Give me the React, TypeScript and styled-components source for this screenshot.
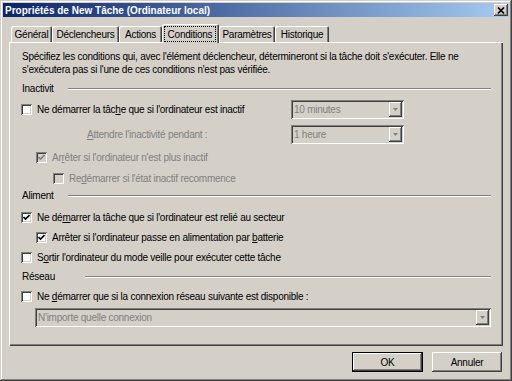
import React from "react";
import styled, { createGlobalStyle, css } from "styled-components";

const face = "#d4d0c8";
const shade = "#808080";
const dark = "#404040";
const light = "#ffffff";

const GlobalStyle = createGlobalStyle`
  html, body {
    margin: 0;
    padding: 0;
    background: ${face};
  }
  body {
    font-family: "Liberation Sans", Arial, sans-serif;
    font-size: 10px;
    letter-spacing: -0.25px;
    color: #000;
  }
  * {
    box-sizing: border-box;
  }
`;

const raised = css`
  box-shadow: inset -1px -1px ${dark}, inset 1px 1px ${light},
    inset -2px -2px ${shade}, inset 2px 2px ${face};
`;

const sunken = css`
  box-shadow: inset 1px 1px ${shade}, inset -1px -1px ${light},
    inset 2px 2px ${dark}, inset -2px -2px ${face};
`;

const Window = styled.div`
  width: 512px;
  height: 381px;
  padding: 3px;
  display: flex;
  flex-direction: column;
  background: ${face};
  box-shadow: inset -1px -1px ${dark}, inset 1px 1px ${face},
    inset -2px -2px ${shade}, inset 2px 2px ${light};
  overflow: hidden;
`;

const TitleBar = styled.div`
  height: 14px;
  display: flex;
  align-items: center;
  justify-content: space-between;
  padding: 0 1px 0 2px;
  background: linear-gradient(to right, #0a246a, #a6caf0);
  color: #fff;
  font-weight: bold;
  font-size: 10px;
  letter-spacing: 0;
  white-space: nowrap;
`;

const CloseButton = styled.div`
  width: 14px;
  height: 12px;
  display: flex;
  align-items: center;
  justify-content: center;
  background: ${face};
  ${raised};
`;

const Body = styled.div`
  flex: 1;
  display: flex;
  flex-direction: column;
  padding: 7px 6px 0 6px;
`;

const TabStrip = styled.div`
  height: 18px;
  display: flex;
  align-items: flex-end;
  padding-left: 2px;
  position: relative;
  z-index: 1;
`;

const Tab = styled.div<{ $active?: boolean; $w: number }>`
  width: ${p => p.$w}px;
  height: ${p => (p.$active ? 19 : 16)}px;
  margin-bottom: ${p => (p.$active ? -1 : 0)}px;
  display: flex;
  align-items: center;
  justify-content: center;
  padding: ${p => (p.$active ? "2px 3px 1px 2px" : "1px 0 0 0")};
  background: ${face};
  border-radius: 2px 2px 0 0;
  box-shadow: inset 1px 1px ${light}, inset -1px 0 ${dark}, inset -2px 0 ${shade};
  position: relative;
  z-index: ${p => (p.$active ? 2 : 1)};
  white-space: nowrap;
`;

const FocusRing = styled.span`
  flex: 1;
  align-self: stretch;
  display: flex;
  align-items: center;
  justify-content: center;
  border: 1px dotted #000;
`;

const Panel = styled.div`
  height: 304px;
  display: flex;
  flex-direction: column;
  padding: 8px 12px 0 12px;
  background: ${face};
  box-shadow: inset 1px 1px ${light}, inset -1px -1px ${dark}, inset -2px -2px ${shade};
`;

const Intro = styled.p`
  margin: 0 0 0 1px;
  line-height: 13px;
`;

const Header = styled.div<{ $mt: number }>`
  height: 13px;
  margin-top: ${p => p.$mt}px;
  margin-left: 1px;
  display: flex;
  align-items: center;
`;

const HeaderLabel = styled.span<{ $w: number }>`
  flex: 0 0 ${p => p.$w}px;
`;

const Rule = styled.div`
  flex: 1;
  height: 2px;
  border-top: 1px solid ${shade};
  border-bottom: 1px solid ${light};
`;

const Row = styled.div<{ $mt: number; $indent?: number; $h?: number }>`
  height: ${p => p.$h ?? 13}px;
  margin-top: ${p => p.$mt}px;
  padding-left: ${p => p.$indent ?? 0}px;
  display: flex;
  align-items: center;
  white-space: nowrap;
`;

const Label = styled.span<{ $disabled?: boolean; $w?: number }>`
  color: ${p => (p.$disabled ? shade : "#000")};
  ${p => p.$w !== undefined && `flex: 0 0 ${p.$w}px;`}
`;

const Box = styled.span<{ $disabled?: boolean }>`
  flex: 0 0 11px;
  width: 11px;
  height: 11px;
  margin-right: 5px;
  display: flex;
  align-items: center;
  justify-content: center;
  background: ${p => (p.$disabled ? face : light)};
  box-shadow: inset 1px 1px ${shade}, inset -1px -1px ${light},
    inset 2px 2px ${dark}, inset -2px -2px ${face};
`;

const Combo = styled.div<{ $w?: number; $ml?: number }>`
  ${p => (p.$w ? `width: ${p.$w}px;` : "flex: 1;")}
  margin-left: ${p => p.$ml ?? 0}px;
  height: 19px;
  display: flex;
  align-items: center;
  padding: 2px;
  background: ${face};
  ${sunken};
`;

const ComboText = styled.span`
  flex: 1;
  padding-left: 1px;
  color: ${shade};
  white-space: nowrap;
  overflow: hidden;
`;

const ComboButton = styled.span`
  width: 13px;
  height: 15px;
  display: flex;
  align-items: center;
  justify-content: center;
  background: ${face};
  ${raised};
`;

const Footer = styled.div`
  display: flex;
  justify-content: flex-end;
  gap: 9px;
  margin-top: 6px;
  padding-right: 1px;
`;

const Button = styled.div<{ $default?: boolean; $w: number }>`
  width: ${p => p.$w}px;
  height: 20px;
  display: flex;
  align-items: center;
  justify-content: center;
  background: ${face};
  ${p =>
    p.$default
      ? css`
          box-shadow: inset 0 0 0 1px #000, inset -2px -2px ${dark}, inset 2px 2px ${light},
            inset -3px -3px ${shade};
        `
      : raised};
`;

function Check({ checked, disabled }: { checked?: boolean; disabled?: boolean }) {
  return (
    <Box $disabled={disabled}>
      {checked && (
        <svg width="7" height="7" viewBox="0 0 7 7">
          <polyline
            points="0.5,3 2.5,5 6.5,1"
            fill="none"
            stroke={disabled ? shade : "#000"}
            strokeWidth="1.6"
          />
        </svg>
      )}
    </Box>
  );
}

function Select({ value, w, ml }: { value: string; w?: number; ml?: number }) {
  return (
    <Combo $w={w} $ml={ml}>
      <ComboText>{value}</ComboText>
      <ComboButton>
        <svg width="5" height="3" viewBox="0 0 5 3">
          <polygon points="0,0 5,0 2.5,3" fill={shade} />
        </svg>
      </ComboButton>
    </Combo>
  );
}

const tabs = [
  { label: "Général", w: 41 },
  { label: "Déclencheurs", w: 67 },
  { label: "Actions", w: 43 },
  { label: "Conditions", w: 57, active: true },
  { label: "Paramètres", w: 56 },
  { label: "Historique", w: 54 },
];

export default function App() {
  return (
    <>
      <GlobalStyle />
      <Window>
        <TitleBar>
          <span>Propriétés de New Tâche (Ordinateur local)</span>
          <CloseButton>
            <svg width="8" height="7" viewBox="0 0 8 7">
              <path d="M1 0.5 L7 6.5 M7 0.5 L1 6.5" stroke="#000" strokeWidth="1.6" />
            </svg>
          </CloseButton>
        </TitleBar>
        <Body>
          <TabStrip>
            {tabs.map(t => (
              <Tab key={t.label} $w={t.w} $active={t.active}>
                {t.active ? <FocusRing>{t.label}</FocusRing> : t.label}
              </Tab>
            ))}
          </TabStrip>
          <Panel>
            <Intro>
              Spécifiez les conditions qui, avec l'élément déclencheur, détermineront si la tâche doit
              s'exécuter. Elle ne
              <br />
              s'exécutera pas si l'une de ces conditions n'est pas vérifiée.
            </Intro>

            <Header $mt={6}>
              <HeaderLabel $w={46}>Inactivit</HeaderLabel>
              <Rule />
            </Header>
            <Row $mt={5} $h={19}>
              <Check />
              <Label $w={254}>
                Ne démarrer la tâc<u>h</u>e que si l'ordinateur est inactif
              </Label>
              <Select value="10 minutes" w={113} />
            </Row>
            <Row $mt={6} $h={19} $indent={66}>
              <Label $disabled $w={204}>
                <u>A</u>ttendre l'inactivité pendant :
              </Label>
              <Select value="1 heure" w={113} />
            </Row>
            <Row $mt={7} $indent={15}>
              <Check checked disabled />
              <Label $disabled>
                Ar<u>r</u>êter si l'ordinateur n'est plus inactif
              </Label>
            </Row>
            <Row $mt={8} $indent={32}>
              <Check disabled />
              <Label $disabled>
                Re<u>d</u>émarrer si l'état inactif recommence
              </Label>
            </Row>

            <Header $mt={4}>
              <HeaderLabel $w={46}>Aliment</HeaderLabel>
              <Rule />
            </Header>
            <Row $mt={9}>
              <Check checked />
              <Label>
                Ne dé<u>m</u>arrer la tâche que si l'ordinateur est relié au secteur
              </Label>
            </Row>
            <Row $mt={7} $indent={15}>
              <Check checked />
              <Label>
                Arrêter si l'ordinateur passe en alimentation par <u>b</u>atterie
              </Label>
            </Row>
            <Row $mt={7}>
              <Check />
              <Label>
                S<u>o</u>rtir l'ordinateur du mode veille pour exécuter cette tâche
              </Label>
            </Row>

            <Header $mt={6}>
              <HeaderLabel $w={63}>Réseau</HeaderLabel>
              <Rule />
            </Header>
            <Row $mt={7}>
              <Check />
              <Label>
                Ne <u>d</u>émarrer que si la connexion réseau suivante est disponible :
              </Label>
            </Row>
            <Row $mt={5} $h={19} $indent={14}>
              <Select value="N'importe quelle connexion" />
            </Row>
          </Panel>
          <Footer>
            <Button $default $w={71}>OK</Button>
            <Button $w={70}>Annuler</Button>
          </Footer>
        </Body>
      </Window>
    </>
  );
}
